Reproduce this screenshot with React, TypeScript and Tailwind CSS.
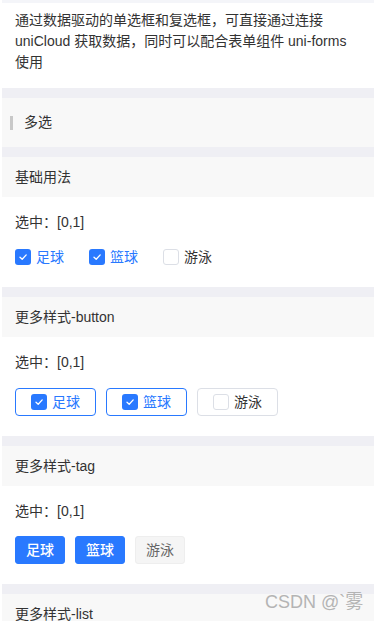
import React from "react";

const FONT = { fontFamily: '"Liberation Sans", "Noto Sans CJK SC", sans-serif' };

function Box({ checked }: { checked: boolean }) {
  return checked ? (
    <span className="flex h-4 w-4 shrink-0 items-center justify-center rounded-[3px] bg-[#2979ff]">
      <svg width="10" height="10" viewBox="0 0 10 10" fill="none">
        <path d="M2 5.2 L4.2 7.3 L8.2 2.9" stroke="#fff" strokeWidth="1.3" strokeLinecap="round" strokeLinejoin="round" />
      </svg>
    </span>
  ) : (
    <span className="block h-4 w-4 shrink-0 rounded-[3px] border border-[#dcdfe6] bg-white" />
  );
}

const items = [
  { t: "足球", c: true },
  { t: "篮球", c: true },
  { t: "游泳", c: false },
];

function Band() {
  return <div className="h-[10px] bg-[#efeff4]" />;
}

function Header({ title }: { title: string }) {
  return (
    <div className="flex h-10 items-center bg-[#f8f8f8] pl-[13px] text-[14px] text-[#333]">{title}</div>
  );
}

function Selected() {
  return <div className="h-5 leading-5 text-[14px] text-[#333]">选中：[0,1]</div>;
}

export default function App() {
  return (
    <div className="relative h-[621px] w-[379px] overflow-hidden bg-white" style={FONT}>
      <div className="ml-[2px] w-[372px]">
        <div className="h-[3px] bg-[#f4f5f9]" />
        <div className="px-[13px] pb-[15px] pt-[7px] text-[14px] leading-[21px] text-[#333]">
          通过数据驱动的单选框和复选框，可直接通过连接 uniCloud 获取数据，同时可以配合表单组件 uni-forms 使用
        </div>
        <Band />
        <div className="flex h-[49px] items-center bg-[#f8f8f8] pl-2 text-[14px] text-[#333]">
          <span className="mr-[11px] h-[14px] w-[3px] bg-[#c8c8c8]" />
          多选
        </div>
        <Band />
        <Header title="基础用法" />
        <div className="px-[13px] pb-5 pt-[15px]">
          <Selected />
          <div className="mt-[15px] flex h-5 items-center">
            {items.map((it) => (
              <div key={it.t} className="mr-[25px] flex items-center">
                <Box checked={it.c} />
                <span className={`ml-[5px] text-[14px] ${it.c ? "text-[#2979ff]" : "text-[#333]"}`}>{it.t}</span>
              </div>
            ))}
          </div>
        </div>
        <Band />
        <Header title="更多样式-button" />
        <div className="px-[13px] pb-5 pt-[15px]">
          <Selected />
          <div className="mt-4 flex items-center gap-[10px]">
            {items.map((it) => (
              <div
                key={it.t}
                className={`flex h-7 items-center rounded-[4px] border px-[15px] ${it.c ? "border-[#2979ff]" : "border-[#dcdfe6]"}`}
              >
                <Box checked={it.c} />
                <span className={`ml-[5px] text-[14px] ${it.c ? "text-[#2979ff]" : "text-[#333]"}`}>{it.t}</span>
              </div>
            ))}
          </div>
        </div>
        <Band />
        <Header title="更多样式-tag" />
        <div className="px-[13px] pb-5 pt-[15px]">
          <Selected />
          <div className="mt-[15px] flex items-center gap-[10px]">
            {items.map((it) => (
              <div
                key={it.t}
                className={`flex h-7 items-center rounded-[3px] border px-[10px] text-[14px] ${
                  it.c ? "border-[#2979ff] bg-[#2979ff] font-medium text-white" : "border-[#eeeeee] bg-[#f5f5f5] text-[#666]"
                }`}
              >
                {it.t}
              </div>
            ))}
          </div>
        </div>
        <Band />
        <Header title="更多样式-list" />
      </div>
      <div className="absolute left-[265px] top-[590px] text-[18px] leading-6 text-[#b4b4b4]">CSDN @`雾</div>
    </div>
  );
}
